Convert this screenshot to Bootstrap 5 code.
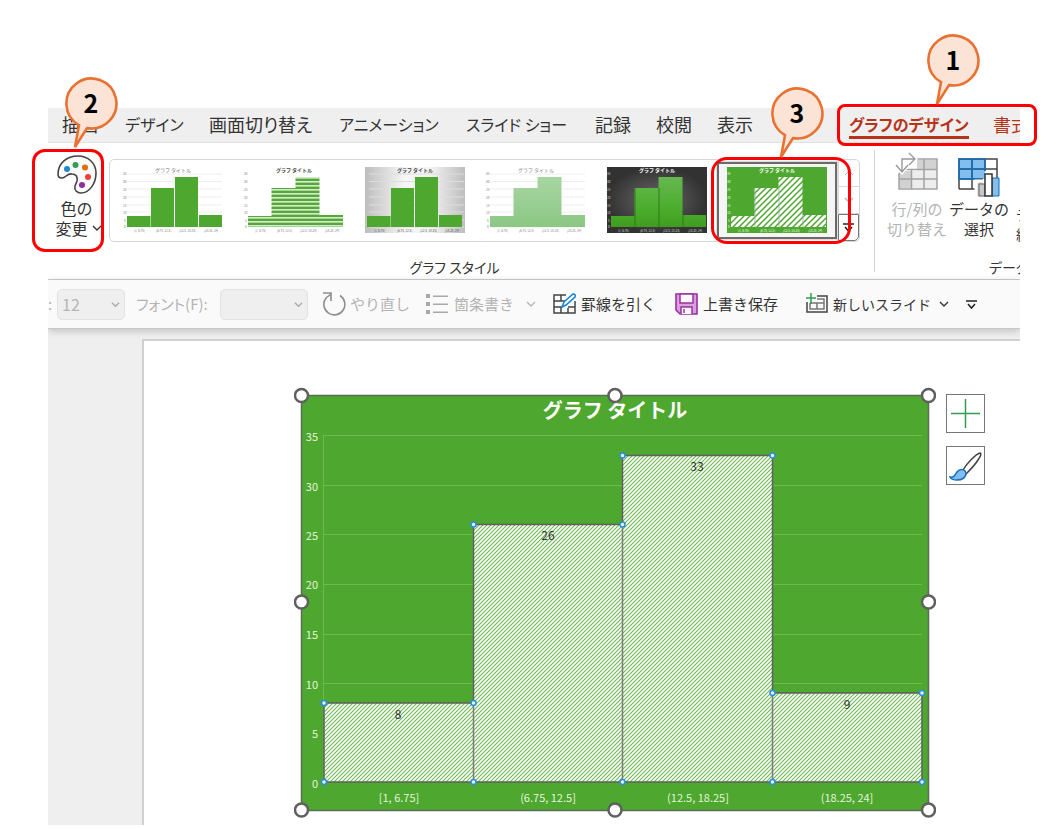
<!DOCTYPE html>
<html lang="ja">
<head>
<meta charset="utf-8">
<meta name="viewport" content="width=device-width, initial-scale=1">
<title>グラフのデザイン</title>
<link href="https://cdn.jsdelivr.net/npm/bootstrap@5.3.0/dist/css/bootstrap.min.css" rel="stylesheet">
<script src="https://cdn.jsdelivr.net/npm/bootstrap@5.3.0/dist/js/bootstrap.bundle.min.js"></script>
<style>
  body { font-family: "Noto Sans CJK JP", sans-serif; font-feature-settings: "palt"; font-size: 16px; line-height: 20px; color: #333; background: #fff; }
  button { color: inherit; background: none; border: 0; padding: 0; white-space: nowrap; line-height: 20px; }
  svg { display: block; flex: none; }
  .guide { padding: 108px 37px 4px 48px; }
  .office { background: #efefef; overflow: hidden; }
  /* ribbon tabs */
  .tab-row { display: grid; grid-template-columns: 63px 84px 130px 127px 129px 61px 61px 132px 144px auto; padding-left: 14px; height: 35px; font-size: 18px; border-bottom: 1px solid #e2e2e2; }
  .tab-row a { color: #333; text-decoration: none; white-space: nowrap; line-height: 32px; justify-self: start; }
  .tab-row .kana { font-size: 16px; }
  .tab-row .accent { color: #b7341a; }
  .tab-row .current { font-weight: 700; border-bottom: 3px solid #b7341a; height: 31px; }
  /* ribbon body */
  .ribbon { background: #fff; height: 137px; border-bottom: 1px solid #cfcfcf; }
  .color-btn { width: 57px; height: 100px; padding-top: 9px; flex: none; }
  .gallery { width: 751px; height: 83px; border: 1px solid #d6d6d6; border-radius: 5px; margin: 16px 0 15px 4px; }
  .gallery .pick { width: 121px; height: 81px; padding: 7px 0 0 13px; flex: none; display: flex; align-items: flex-start; }
  .gallery .pick.chosen { border: 2px solid #6b6b6b; outline: 1px solid #ddd; margin: 2px 0 2px 2px; width: 120px; height: 77px; padding: 3px 0 0 8px; background: #f5f5f5; }
  .scroller button { height: 27px; width: 21px; border: 1px solid #d9d9d9; border-width: 0 0 1px 1px; display: flex; align-items: center; justify-content: center; }
  .scroller button:last-child { border: 1px solid #777; border-radius: 0 0 5px 0; }
  .group-name { font-size: 14px; padding-right: 56px; }
  .divide { width: 1px; height: 122px; background: #d2d2d2; margin: 7px 11px 0 14px; flex: none; }
  .data-group { width: 250px; flex: none; font-size: 15px; }
  .data-group button { width: 62px; flex: none; }
  .data-group .cut { padding: 53px 0 0 6px; font-size: 14px; }
  .data-name { font-size: 14px; padding: 13px 0 0 103px; }
  .faded { color: #b4b4b4; }
  /* quick access */
  .quick { display: grid; grid-template-columns: 9px 79px 84px 102px 104px 127px 122px 130px 157px 1fr; align-items: center; height: 49px; background: #fafafa; border-bottom: 1px solid #c8c8c8; box-shadow: 0 2px 8px #0003; position: relative; white-space: nowrap; font-size: 15px; }
  .quick .form-select { height: 31px; padding: 0 20px 0 4px; font-size: 16px; line-height: 20px; background-color: #efefef; border-color: #e2e2e2; border-radius: 5px; color: #b4b4b4; background-position: right 4px center; background-size: 9px 9px; background-image: url("data:image/svg+xml,%3Csvg xmlns='http://www.w3.org/2000/svg' viewBox='0 0 10 10'%3E%3Cpath d='M1 3l4 4 4-4' fill='none' stroke='%23aaa' stroke-width='1.4'/%3E%3C/svg%3E"); }
  .quick .size-select { width: 68px; }
  .quick .face-select { width: 88px; }
  .quick button { display: flex; align-items: center; gap: 4px; }
  .quick .long-name { font-size: 14px; }
  /* slide */
  .slide-pane { margin: 10px 0 0 94px; background: #fff; border: 1px solid #d0d0d0; border-width: 2px 0 0 2px; padding: 46px 0 6px 150px; }
  .slide-pane .side { padding: 7px 0 0 10px; gap: 13px; }
  .side button { width: 39px; height: 39px; border: 1px solid #767676; display: flex; align-items: center; justify-content: center; }
  .ticks text { font-size: 11px; fill: #e6f5df; }
  /* annotations */
  .frame { position: absolute; border: 3px solid #f00; pointer-events: none; }
  .f1 { left: 837px; top: 104px; width: 200px; height: 42px; border-radius: 8px; }
  .f2 { left: 32px; top: 149px; width: 72px; height: 103px; border-radius: 13px; }
  .f3 { left: 711px; top: 157px; width: 140px; height: 87px; border-radius: 16px; }
  .callout { position: absolute; }
  .callout text { font-weight: 700; font-size: 25px; fill: #000; }
  .c1 { left: 925px; top: 33px; } .c2 { left: 63px; top: 76px; } .c3 { left: 769px; top: 86px; }
</style>
</head>
<body>
<svg width="0" height="0" class="position-absolute" aria-hidden="true">
  <defs>
    <linearGradient id="lightBg"><stop offset="0" stop-color="#bdbdbd"/><stop offset=".4" stop-color="#f7f7f7"/><stop offset=".65" stop-color="#f4f4f4"/><stop offset="1" stop-color="#bdbdbd"/></linearGradient>
    <radialGradient id="darkBg"><stop offset="0" stop-color="#6a6a6a"/><stop offset="1" stop-color="#323232"/></radialGradient>
    <linearGradient id="paleBar" gradientUnits="userSpaceOnUse" x1="0" y1="10" x2="0" y2="60"><stop offset="0" stop-color="#a8d6a2"/><stop offset="1" stop-color="#8bc783"/></linearGradient>
    <linearGradient id="glowBar" gradientUnits="userSpaceOnUse" x1="0" y1="10" x2="0" y2="60"><stop offset="0" stop-color="#66b750"/><stop offset=".6" stop-color="#4cae2e"/><stop offset="1" stop-color="#3f9d1e"/></linearGradient>
    <pattern id="rows" width="4" height="4" patternUnits="userSpaceOnUse"><rect width="4" height="4" fill="#55aa37"/><rect y="2" width="4" height="1" fill="#d3ebcc"/><rect y="3" width="4" height="1" fill="#a4d297"/></pattern>
    <pattern id="wideHatch" width="6" height="6" patternUnits="userSpaceOnUse"><rect width="6" height="6" fill="#fff"/><path d="M-1 1L1-1M-1 7L7-1M5 7L7 5" stroke="#4ea72e" stroke-width="1.500"/></pattern>
    <pattern id="hatch" width="4" height="4" patternUnits="userSpaceOnUse"><rect width="4" height="4" fill="#fff"/><path d="M-1 1L1-1M-1 5L5-1M3 5L5 3" stroke="#6cb852" stroke-width="1.100"/></pattern>
    <path id="bars" d="M4 49h23.500v11h-23.500zM28 21h23v39h-23zM52 10h23v50h-23zM76 48h23v12h-23z"/>
    <path id="joined" d="M4 49h23.500v-28h24v-11h24v38h23.500v12h-95z"/>
    <path id="gridlines" d="M4 7h95M4 14.500h95M4 22h95M4 30h95M4 38h95M4 45h95M4 53h95M4 60h95"/>
    <g id="marks" font-size="3"><text x="0" y="8">35</text><text x="0" y="16">30</text><text x="0" y="24">25</text><text x="0" y="32">20</text><text x="0" y="40">15</text><text x="0" y="47">10</text><text x="1" y="55">5</text><text x="1" y="61">0</text><text x="11" y="65">[1, 6.75]</text><text x="33" y="65">(6.75, 12.5]</text><text x="56" y="65">(12.5, 18.25]</text><text x="81" y="65">(18.25, 24]</text></g>
    <path id="chev" d="M1 3l4 4 4-4" fill="none" stroke="currentColor" stroke-width="1.400"/>
    <path id="bubble" d="M16 49.200A25 25 0 1 1 24 52.100L12 71Z" fill="#fbe3d6" stroke="#e97132" stroke-width="2.600"/>
  </defs>
</svg>

<div class="guide position-relative">
  <main class="office">
    <nav class="tab-row" aria-label="リボン">
      <a href="#">描画</a><a href="#" class="kana">デザイン</a><a href="#">画面切り替え</a><a href="#" class="kana">アニメーション</a><a href="#" class="kana">スライド ショー</a><a href="#">記録</a><a href="#">校閲</a><a href="#">表示</a><a href="#" class="kana accent current">グラフのデザイン</a><a href="#" class="accent">書式</a>
    </nav>

    <section class="ribbon d-flex">
      <button class="color-btn d-flex flex-column align-items-center">
        <svg width="42" height="42" viewBox="0 0 42 42"><path d="M2 22C2 11 11 4 22 4c10 0 18 7 18 17 0 11-7 20-15 20-4 0-7-3-6-7l2-5c1-4-1-7-5-7-5-1-6 4-10 4-3 0-4-1-4-4z" fill="#fafafa" stroke="#444" stroke-width="1.600"/><circle cx="11" cy="17" r="3" fill="#1e88d2"/><circle cx="19.500" cy="13" r="3" fill="#2f9e4f"/><circle cx="29" cy="15.500" r="3" fill="#e36c0a"/><circle cx="32" cy="25" r="3" fill="#f03c3c"/><circle cx="26" cy="33" r="3" fill="#8e2d9c"/></svg>
        <span class="mt-1">色の</span>
        <span class="d-flex align-items-center gap-1 ps-1">変更<svg width="10" height="10"><use href="#chev"/></svg></span>
      </button>

      <div class="flex-shrink-0">
        <div class="gallery d-flex">
          <button class="pick" aria-label="スタイル 1"><svg width="100" height="67"><use href="#gridlines" stroke="#eee"/><use href="#bars" fill="#4ea72e"/><use href="#marks" fill="#777"/><text x="50" y="5" font-size="5" text-anchor="middle" fill="#777">グラフ タイトル</text></svg></button>
          <button class="pick" aria-label="スタイル 2"><svg width="100" height="67"><use href="#joined" fill="url(#rows)"/><use href="#marks" fill="#777"/><text x="50" y="5" font-size="5" font-weight="700" text-anchor="middle" fill="#444">グラフ タイトル</text></svg></button>
          <button class="pick" aria-label="スタイル 3"><svg width="100" height="67"><rect width="100" height="66" fill="url(#lightBg)"/><use href="#gridlines" stroke="#ddd"/><g transform="translate(-2 0)"><use href="#bars" fill="#4ea72e"/></g><text x="50" y="5" font-size="5" font-weight="700" text-anchor="middle" fill="#444">グラフ タイトル</text><g font-size="3" fill="#555"><text x="9" y="65">[1, 6.75]</text><text x="32" y="65">(6.75, 12.5]</text><text x="55" y="65">(12.5, 18.25]</text><text x="80" y="65">(18.25, 24]</text></g></svg></button>
          <button class="pick" aria-label="スタイル 4"><svg width="100" height="67"><use href="#gridlines" stroke="#eee"/><use href="#joined" fill="url(#paleBar)"/><use href="#marks" fill="#777"/><text x="50" y="5" font-size="5" text-anchor="middle" fill="#888">グラフ タイトル</text></svg></button>
          <button class="pick" aria-label="スタイル 5"><svg width="100" height="67"><rect width="100" height="66" fill="url(#darkBg)"/><use href="#joined" fill="url(#glowBar)"/><path d="M28 21v39M52 21v39M76 48v12" stroke="#2f7a16"/><use href="#marks" fill="#ddd"/><text x="50" y="5" font-size="5" font-weight="700" text-anchor="middle" fill="#fff">グラフ タイトル</text></svg></button>
          <button class="pick chosen" aria-label="スタイル 6"><svg width="100" height="67"><rect width="100" height="66" fill="#4ea72e"/><use href="#joined" fill="url(#wideHatch)"/><path d="M28 21v39M52 21v39M76 48v12" stroke="#9aa" stroke-width=".8"/><use href="#marks" fill="#fff"/><text x="50" y="5" font-size="5" font-weight="700" text-anchor="middle" fill="#fff">グラフ タイトル</text></svg></button>
          <div class="scroller ms-auto">
            <button class="faded" aria-label="上へ"><svg width="10" height="10" viewBox="0 0 10 10"><path d="M1 7l4-4 4 4" fill="none" stroke="currentColor"/></svg></button>
            <button class="faded" aria-label="下へ"><svg width="10" height="10"><use href="#chev"/></svg></button>
            <button aria-label="その他"><svg width="11" height="11" viewBox="0 0 11 11" fill="none" stroke="#222" stroke-width="1.500"><path d="M0 2h11M2 5l3.500 4 3.500-4"/></svg></button>
          </div>
        </div>
        <div class="group-name text-center">グラフ スタイル</div>
      </div>

      <div class="divide"></div>
      <div class="data-group">
        <div class="d-flex pt-2">
          <button class="faded d-flex flex-column align-items-center"><svg width="44" height="48" viewBox="0 0 44 48"><path d="M4 20h38v17H4zM22 9h20v11H22z" fill="#ededed"/><path d="M22 9h20v10H22zM4 20h12v17H4z" fill="#d2d2d2"/><path d="M22 8h20v30H4V22M4 28h38M10 18.500h32M16.500 18v20M29 8v30" fill="none" stroke="#a2a2a2" stroke-width="1.500"/><path d="M7 20V8h12M14 2l6 6-6 6M1 14l6 7 6-7" fill="none" stroke="#fff" stroke-width="4"/><path d="M7 20V8h12M14 2l6 6-6 6M1 14l6 7 6-7" fill="none" stroke="#999" stroke-width="1.400"/></svg><span>行/列の</span><span>切り替え</span></button>
          <button class="d-flex flex-column align-items-center"><svg width="44" height="48" viewBox="0 0 44 48"><path d="M2 8h38v30H2z" fill="#fff"/><path d="M2 8h26v20H2z" fill="#83beec"/><path d="M2 38V8h38v20M15 8v30M28 8v12M2 18h38M2 28h24M2 38h20" fill="none" stroke="#444" stroke-width="1.500"/><path d="M2 28V8h26v12M15 8v20M2 18h26M2 28h22" fill="none" stroke="#1370bd" stroke-width="1.500"/><path d="M19 30h8v17h-8z" fill="#c8c8c8" stroke="#fff" stroke-width="3"/><path d="M22 33h6v12h-6z" fill="#c8c8c8" stroke="#666"/><path d="M35 27h7v18h-7z" fill="#83beec" stroke="#1370bd"/><path d="M28 23h7v22h-7z" fill="#fff" stroke="#333" stroke-width="1.500"/></svg><span>データの</span><span>選択</span></button>
          <button class="cut text-start align-self-start"><span class="d-block">データの</span><span class="d-block">絞り込み</span></button>
        </div>
        <div class="data-name">データ</div>
      </div>
    </section>

    <section class="quick">
      <label class="faded" for="size">:</label>
      <div><select id="size" class="form-select size-select"><option>12</option></select></div>
      <label class="faded" for="face">フォント(F):</label>
      <select id="face" class="form-select face-select"><option></option></select>
      <button class="faded"><svg width="24" height="26" viewBox="0 0 24 26" fill="none" stroke="#8e8e8e" stroke-width="1.600"><path d="M1 2h8v8M9 3L4 7A10.500 10.500 0 1 0 18 4.500"/></svg>やり直し</button>
      <button class="faded"><svg width="24" height="24" viewBox="0 0 24 24" fill="#a8a8a8"><path d="M0 2h4v4H0zM0 10h4v4H0zM0 18h4v4H0zM7 3.500h15v1.400H7zM7 11.500h15v1.400H7zM7 19.500h15v1.400H7z"/></svg>箇条書き<svg class="ms-2" width="10" height="10"><use href="#chev"/></svg></button>
      <button><svg width="24" height="24" viewBox="0 0 24 24" fill="none"><path d="M13 3H1v18h21V9M8 3v6M8 15v6M1 9h11M1 15h8M15 16v5M15 15h7" stroke="#444" stroke-width="1.500"/><path d="M9 15l2-5 9-8q3 0 2 3l-9 8z" fill="#fff" stroke="#1a86d0" stroke-width="1.600"/></svg>罫線を引く</button>
      <button><svg width="24" height="24" viewBox="0 0 24 24"><path d="M1 2h21v20H5l-4-4z" fill="#d9a0dd" stroke="#9c2fa4" stroke-width="1.600"/><path d="M5 2h13v9H5zM6 22v-7h11v7" fill="#fafafa" stroke="#9c2fa4" stroke-width="1.500"/><path d="M9 17v4" stroke="#9c2fa4" stroke-width="1.500"/></svg>上書き保存</button>
      <button class="long-name"><svg width="24" height="24" viewBox="0 0 24 24" fill="none"><path d="M12 4h10v16H2V10" stroke="#444" stroke-width="1.500"/><path d="M12 7h7v10H5v-6M5 11h14M12 11v6" stroke="#777" stroke-width="1.500"/><path d="M6 1v11M1 6h10" stroke="#2f9e4f" stroke-width="1.500"/></svg>新しいスライド<svg class="ms-1" width="10" height="10"><use href="#chev"/></svg></button>
      <button class="ps-1" aria-label="カスタマイズ"><svg width="11" height="11" viewBox="0 0 11 11" fill="none" stroke="#222" stroke-width="1.500"><path d="M0 2h11M2 5l3.500 4 3.500-4"/></svg></button>
    </section>

    <section class="slide-pane d-flex">
      <svg width="642" height="432" viewBox="294 387 642 432" role="img" aria-label="ヒストグラム">
        <rect x="301.500" y="395.500" width="627" height="415" fill="#4ea72e" stroke="#5d6b57" stroke-width="1.500"/>
        <path d="M323.500 435.500H922M323.500 485.500H922M323.500 534.500H922M323.500 584.500H922M323.500 634.500H922M323.500 683.500H922M323.500 733.500H922M323.500 435v347" fill="none" stroke="#6fb955"/>
        <path d="M324 703H473.500V524.500H622.500V455.500H772.500V693H922V782H324Z" fill="url(#hatch)" stroke="#5f5f5f" stroke-width="1.500"/>
        <path d="M473.500 703V782M622.500 524V782M772.500 693V782" stroke="#7a7a7a" stroke-width="1.500"/>
        <text x="615" y="418" text-anchor="middle" font-size="20" font-weight="700" fill="#fff" style="font-feature-settings:normal">グラフ タイトル</text>
        <g class="ticks" text-anchor="end"><text x="318" y="441">35</text><text x="318" y="491">30</text><text x="318" y="540">25</text><text x="318" y="589">20</text><text x="318" y="639">15</text><text x="318" y="689">10</text><text x="318" y="738">5</text><text x="318" y="788">0</text></g>
        <g class="ticks" text-anchor="middle"><text x="399" y="802">[1, 6.75]</text><text x="548" y="802">(6.75, 12.5]</text><text x="698" y="802">(12.5, 18.25]</text><text x="847" y="802">(18.25, 24]</text></g>
        <g font-size="12" text-anchor="middle" fill="#333"><text x="398" y="719">8</text><text x="548" y="540">26</text><text x="697" y="471">33</text><text x="847" y="709">9</text></g>
        <g fill="#e4f3ff" stroke="#2a8fdc" stroke-width="1.500"><circle cx="324" cy="703" r="2.500"/><circle cx="473.500" cy="703" r="2.500"/><circle cx="473.500" cy="524.500" r="2.500"/><circle cx="622.500" cy="524.500" r="2.500"/><circle cx="622.500" cy="455.500" r="2.500"/><circle cx="772.500" cy="455.500" r="2.500"/><circle cx="772.500" cy="693" r="2.500"/><circle cx="922" cy="693" r="2.500"/><circle cx="324" cy="782" r="2.500"/><circle cx="473.500" cy="782" r="2.500"/><circle cx="622.500" cy="782" r="2.500"/><circle cx="772.500" cy="782" r="2.500"/><circle cx="922" cy="782" r="2.500"/></g>
        <g fill="#fff" stroke="#606060" stroke-width="2.500"><circle cx="301.500" cy="395.500" r="6.500"/><circle cx="615" cy="395.500" r="6.500"/><circle cx="928.500" cy="395.500" r="6.500"/><circle cx="301.500" cy="602" r="6.500"/><circle cx="928.500" cy="602" r="6.500"/><circle cx="301.500" cy="810" r="6.500"/><circle cx="615" cy="810" r="6.500"/><circle cx="928.500" cy="810" r="6.500"/></g>
      </svg>
      <div class="side d-flex flex-column">
        <button aria-label="グラフ要素"><svg width="30" height="30" viewBox="0 0 30 30"><path d="M14.500 0v29M0 14.500h29" stroke="#2f9e4f" stroke-width="1.500"/></svg></button>
        <button aria-label="グラフ スタイル"><svg width="34" height="32" viewBox="0 0 34 32"><path d="M14 20C18 13 27 4 31 3c2 1 0 4-2 7-3 5-8 10-12 14z" fill="#fff" stroke="#444" stroke-width="1.500"/><path d="M1 27c4 1 5-2 7-5 3-4 9-3 9 2-1 5-5 6-9 6-3 0-6-1-7-3z" fill="#83beec" stroke="#1370bd" stroke-width="1.500"/></svg></button>
      </div>
    </section>
  </main>

  <div class="frame f1"></div><div class="frame f2"></div><div class="frame f3"></div>
  <svg class="callout c1" width="58" height="74"><use href="#bubble"/><text x="28" y="37" text-anchor="middle">1</text></svg>
  <svg class="callout c2" width="58" height="74"><use href="#bubble"/><text x="28" y="37" text-anchor="middle">2</text></svg>
  <svg class="callout c3" width="58" height="74"><use href="#bubble"/><text x="28" y="37" text-anchor="middle">3</text></svg>
</div>
</body>
</html>
